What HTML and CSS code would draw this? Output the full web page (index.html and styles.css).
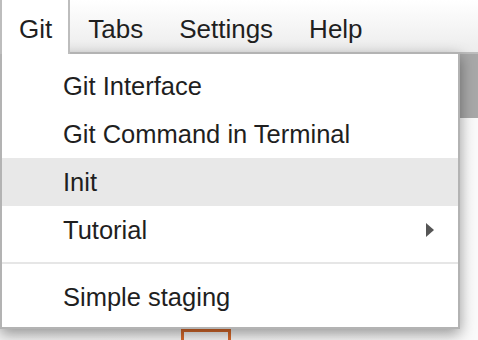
FILE: index.html
```html
<!DOCTYPE html>
<html lang="en">
<head>
  <meta charset="UTF-8" />
  <title>Git menu</title>
  <link rel="stylesheet" href="styles.css">
</head>
<body>

  <div class="menubar">
    <div class="menubar-item active">Git</div>
    <div class="menubar-item">Tabs</div>
    <div class="menubar-item">Settings</div>
    <div class="menubar-item">Help</div>
  </div>

  <div class="main">
    <div class="toolbar"></div>
    <div class="content">
      <div class="cell-marker"></div>
    </div>

    <div class="menu">
      <div class="menu-item">Git Interface</div>
      <div class="menu-item">Git Command in Terminal</div>
      <div class="menu-item hover">Init</div>
      <div class="menu-item submenu">
        <span>Tutorial</span>
        <span class="arrow"></span>
      </div>
      <div class="separator"></div>
      <div class="menu-item">Simple staging</div>
    </div>
  </div>

</body>
</html>
```

FILE: styles.css
```css
* {
  margin: 0; padding: 0; box-sizing: border-box;
}

body {
  width: 478px;
  height: 340px;
  overflow: hidden;
  background: #ffffff;
  font-family: 'Liberation Sans', Arial, sans-serif;
  color: #1f1f1f;
}

.menubar {
  display: flex;
  height: 54px;
  background: linear-gradient(#ffffff, #ececec);
  border-bottom: 2px solid #bdbdbd;
}

.menubar-item {
  padding: 7px 18px 0;
  font-size: 26px;
  line-height: 45px;
}

.menubar-item.active {
  background: #ffffff;
  border-left: 2px solid #bdbdbd;
  border-right: 2px solid #bdbdbd;
  margin-bottom: -2px;
  padding: 7px 16px 0 17px;
  position: relative;
  z-index: 2;
}

.main {
  position: relative;
  height: 286px;
  display: flex;
  flex-direction: column;
}

.toolbar {
  height: 64px;
  background: #a8a8a8;
}

.content {
  flex: 1;
  background: linear-gradient(90deg, #f4f4f4, #fafafa);
  display: flex;
  align-items: flex-end;
}

.cell-marker {
  width: 50px;
  height: 11px;
  margin-left: 181px;
  border: 3px solid #d96a2b;
  border-bottom: none;
}

.menu {
  position: absolute;
  top: -2px;
  left: 0;
  width: 460px;
  height: 277px;
  background: #ffffff;
  border: 2px solid #b3b3b3;
  padding: 8px 0;
  box-shadow: 0 5px 14px rgba(0, 0, 0, 0.4);
  z-index: 1;
}

.menu-item {
  height: 48px;
  padding: 0 24px 0 61px;
  font-size: 25.5px;
  display: flex;
  align-items: center;
  justify-content: space-between;
}

.menu-item.hover {
  background: #e8e8e8;
}

.arrow {
  width: 0;
  height: 0;
  border-top: 7px solid transparent;
  border-bottom: 7px solid transparent;
  border-left: 8px solid #555555;
}

.separator {
  height: 2px;
  margin: 8px 0 9px;
  background: #e6e6e6;
}
```
